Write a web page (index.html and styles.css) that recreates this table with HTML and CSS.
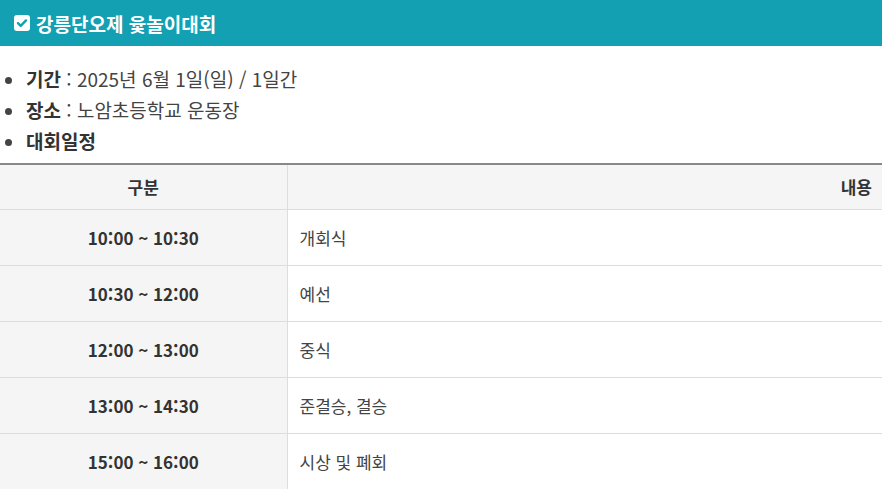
FILE: index.html
```html
<!DOCTYPE html>
<html lang="ko">
<head>
<meta charset="utf-8">
<link rel="stylesheet" href="styles.css">
</head>
<body>
<div class="page">
  <h2 class="title">
    <svg class="chk" width="16" height="16" viewBox="0 0 16 16"><rect x="0" y="0" width="16" height="16" rx="3" fill="#fff"/><path d="M4 8.2l2.7 2.6L12 5.4" fill="none" stroke="#13a0b3" stroke-width="2.4" stroke-linecap="round" stroke-linejoin="round"/></svg>
    강릉단오제 윷놀이대회
  </h2>
  <ul class="info">
    <li><b>기간</b> : 2025년 6월 1일(일) / 1일간</li>
    <li><b>장소</b> : 노암초등학교 운동장</li>
    <li><b>대회일정</b></li>
  </ul>
  <table class="sched">
    <thead>
      <tr><th class="c1">구분</th><th class="c2">내용</th></tr>
    </thead>
    <tbody>
      <tr><td class="c1">10:00 ~ 10:30</td><td class="c2">개회식</td></tr>
      <tr><td class="c1">10:30 ~ 12:00</td><td class="c2">예선</td></tr>
      <tr><td class="c1">12:00 ~ 13:00</td><td class="c2">중식</td></tr>
      <tr><td class="c1">13:00 ~ 14:30</td><td class="c2">준결승, 결승</td></tr>
      <tr><td class="c1">15:00 ~ 16:00</td><td class="c2">시상 및 폐회</td></tr>
    </tbody>
  </table>
</div>
</body>
</html>
```
FILE: styles.css
```css
* { box-sizing: border-box; }
html, body { margin: 0; padding: 0; background: #fff; }
body { font-family: "Noto Sans CJK KR", "Noto Sans", sans-serif; color: #444; }
.title {
  margin: 0;
  height: 46px;
  background: #13a0b3;
  color: #fff;
  font-size: 19px;
  font-weight: 700;
  display: flex;
  align-items: center;
  gap: 6px;
  padding: 0 0 0 14px;
}
.chk { flex: none; }
.info {
  margin: 0;
  padding: 17px 0 7px 26px;
  font-size: 19px;
  line-height: 31px;
  color: #444;
}
.info li::marker { color: #444; }
.info b { font-weight: 700; color: #333; }
.sched {
  width: 100%;
  border-collapse: collapse;
  border-top: 2px solid #888;
  font-size: 17px;
}
.sched th {
  height: 45px;
  background: #f5f5f5;
  font-weight: 700;
  color: #333;
  border-bottom: 1px solid #ddd;
}
.sched th.c1 { width: 287px; text-align: center; border-right: 1px solid #ddd; }
.sched th.c2 { text-align: right; padding-right: 10px; }
.sched td {
  height: 56px;
  border-bottom: 1px solid #ddd;
  color: #444;
}
.sched td.c1 {
  background: #f5f5f5;
  text-align: center;
  font-weight: 700;
  color: #333;
  border-right: 1px solid #ddd;
}
.sched td.c2 { padding-left: 12px; }
```
